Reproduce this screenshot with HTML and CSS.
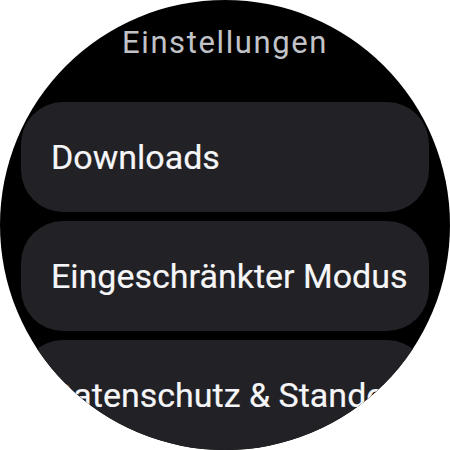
FILE: index.html
```html
<!DOCTYPE html>
<html lang="de">
<head>
<meta charset="utf-8">
<title>Einstellungen</title>
<link rel="stylesheet" href="styles.css">
</head>
<body>
<div class="screen">
  <div class="title">Einstellungen</div>
  <div class="list">
    <div class="chip"><span class="label">Downloads</span></div>
    <div class="chip"><span class="label">Eingeschränkter Modus</span></div>
    <div class="chip"><span class="label">Datenschutz &amp; Standort</span></div>
  </div>
</div>
</body>
</html>
```

FILE: styles.css
```css
html, body {
  margin: 0;
  padding: 0;
  background: #ffffff;
}
.screen {
  width: 450px;
  height: 450px;
  border-radius: 50%;
  background: #000000;
  overflow: hidden;
  font-family: Roboto, "Noto Sans", sans-serif;
}
.title {
  padding-top: 28px;
  height: 30px;
  line-height: 30px;
  font-size: 31px;
  letter-spacing: 1.6px;
  color: #c1c3c8;
  text-align: center;
}
.list {
  margin-top: 44px;
  padding: 0 21px;
  display: flex;
  flex-direction: column;
  gap: 9px;
}
.chip {
  height: 110px;
  border-radius: 42px;
  background: #212126;
  display: flex;
  align-items: center;
  padding-left: 30px;
  overflow: hidden;
  white-space: nowrap;
}
.label {
  font-size: 34px;
  color: #f6f6f8;
  -webkit-text-stroke: 0.2px #f6f6f8;
}
```
